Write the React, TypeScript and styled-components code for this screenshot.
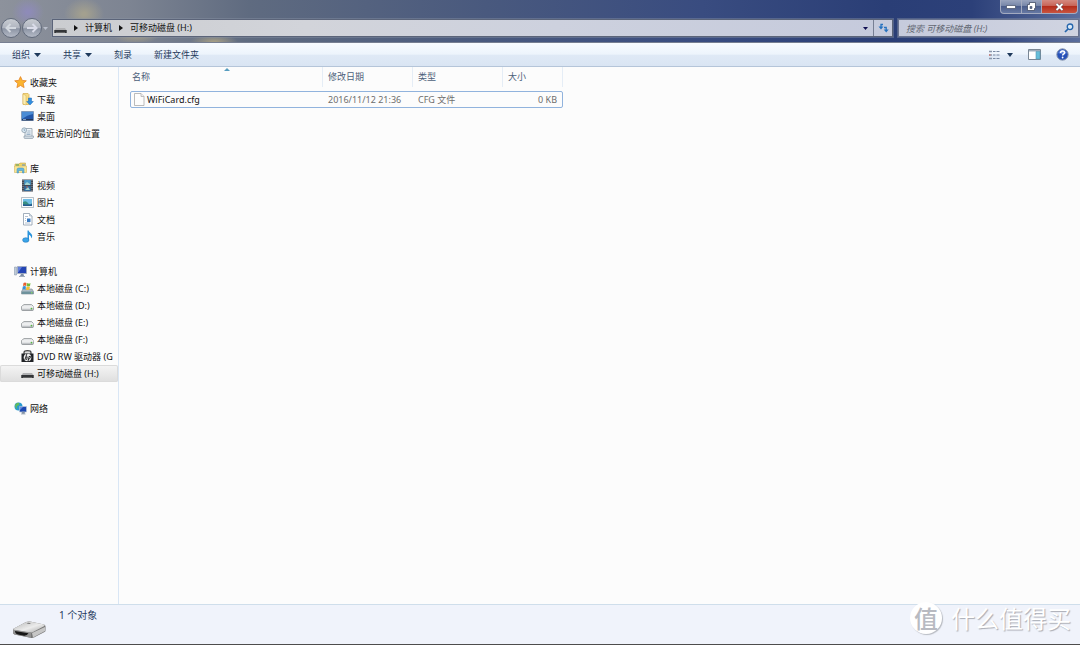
import React from "react";
import styled, { createGlobalStyle } from "styled-components";

const GlobalStyle = createGlobalStyle`
  *, *::before, *::after { box-sizing: border-box; }
  body {
    margin: 0;
    background: #fcfcfc;
    color: #111;
    font-family: "Noto Sans", "Noto Sans CJK SC", sans-serif;
    font-size: 9px;
    line-height: 17px;
  }
  button, input { font: inherit; color: inherit; margin: 0; padding: 0; border: 0; background: none; }
  svg { display: block; flex: none; }
  a { color: inherit; text-decoration: none; }
`;

const Window = styled.div`
  display: flex;
  flex-direction: column;
  min-height: 100vh;
  border-bottom: 1px solid #4d4c4c;
`;

const Frame = styled.header`
  display: flex;
  flex-direction: column;
  height: 43px;
  border-bottom: 1px solid #777f92;
  background:
    radial-gradient(ellipse 16px 14px at 28px 12px, #8e8bb8 10%, transparent 100%),
    radial-gradient(ellipse 20px 16px at 84px 14px, #a3a08f 10%, transparent 100%),
    radial-gradient(ellipse 26px 12px at 136px 32px, #b0a583 10%, transparent 100%),
    radial-gradient(ellipse 24px 8px at 214px 42px, #a39c85 10%, transparent 100%),
    linear-gradient(90deg, #8d929c 0%, #7d8492 12%, #5f6b80 23%, #49597e 45%, #394c80 65%, #2a3e76 82%, #2c4079 90%, #5b6e9d 100%);
`;

const Captions = styled.div`
  display: flex;
  justify-content: flex-end;
  height: 18px;
  padding-right: 2px;
`;

const Caption = styled.button<{ $wide?: boolean; $edge?: boolean }>`
  display: grid;
  place-items: center;
  width: ${(p) => (p.$wide ? "36px" : p.$edge ? "22px" : "20px")};
  height: 14px;
  border: 1px solid #a3aac0;
  border-top: 0;
  border-left-width: ${(p) => (p.$edge ? "1px" : "0")};
  border-radius: ${(p) => (p.$edge ? "0 0 0 4px" : p.$wide ? "0 0 4px 0" : "0")};
  background: ${(p) =>
    p.$wide
      ? "linear-gradient(#d48a80 0%, #c9675a 42%, #b52d1b 50%, #c9543f 100%)"
      : "linear-gradient(#99a4be 0%, #7988aa 42%, #4b5d8b 50%, #6678a3 100%)"};
`;

const AddressRow = styled.div`
  display: flex;
  align-items: center;
  height: 20px;
  padding-right: 1px;
`;

const HistoryButtons = styled.div`
  display: flex;
  align-items: center;
  gap: 1px;
  width: 52px;
  padding-left: 1px;
`;

const RoundButton = styled.button`
  display: grid;
  place-items: center;
  width: 20px;
  height: 20px;
  border: 1px solid #626b7c;
  border-radius: 50%;
  background: linear-gradient(#c8ccd2 0%, #b0b5c0 48%, #8c94a4 54%, #b4bac6 100%);
`;

const AddressBar = styled.div`
  display: flex;
  flex: 1;
  height: 18px;
  border: 1px solid #5b6479;
  box-shadow: 0 0 0 1px #8d95a866;
  background: linear-gradient(90deg, #cbcdd0 0%, #d2d4da 30%, #cdd1de 60%, #c5cadc 100%);
`;

const Crumbs = styled.nav`
  display: flex;
  flex: 1;
  align-items: center;
  gap: 7px;
  padding-left: 1px;
  line-height: 14px;
`;

const BarButton = styled.button<{ $divided?: boolean }>`
  display: grid;
  place-items: center;
  width: ${(p) => (p.$divided ? "19px" : "16px")};
  border-left: ${(p) => (p.$divided ? "1px solid #777f94" : "0")};
`;

const Search = styled.label`
  display: flex;
  align-items: center;
  width: 181px;
  height: 18px;
  margin-left: 5px;
  padding: 0 4px 0 7px;
  border: 1px solid #69738f;
  box-shadow: 0 0 0 1px #8d95a866;
  background: linear-gradient(90deg, #c6cbdc, #d0d4e1);
`;

const SearchInput = styled.input`
  flex: 1;
  min-width: 0;
  height: 14px;
  font-style: italic;
  &::placeholder { color: #626873; opacity: 1; }
`;

const Toolbar = styled.div`
  display: flex;
  align-items: center;
  justify-content: space-between;
  height: 24px;
  padding: 0 11px 0 12px;
  border-bottom: 1px solid #b5c5d9;
  background: linear-gradient(#f8fbff 0%, #edf4fc 48%, #dfe9f6 54%, #dae5f3 100%);
  color: #1e395b;
`;

const Commands = styled.div`
  display: flex;
  align-items: center;
  gap: 22px;
`;

const Command = styled.button`
  display: flex;
  align-items: center;
  gap: 4px;
`;

const ViewTools = styled.div`
  display: flex;
  align-items: center;
  gap: 15px;
`;

const ViewSplit = styled.div`
  display: flex;
  align-items: center;
  gap: 7px;
`;

const Body = styled.div`
  display: flex;
  flex: 1;
`;

const Sidebar = styled.nav`
  display: flex;
  flex-direction: column;
  gap: 18px;
  width: 119px;
  padding-top: 7px;
  border-right: 1px solid #d9e6f5;
  overflow: hidden;
`;

const Group = styled.ul`
  list-style: none;
  margin: 0;
  padding: 0;
`;

const TreeLink = styled.a<{ $root?: boolean; $selected?: boolean }>`
  display: flex;
  align-items: center;
  gap: 3px;
  height: 17px;
  padding-left: ${(p) => (p.$root ? "14px" : "21px")};
  white-space: nowrap;
  border-radius: 2px;
  background: ${(p) => (p.$selected ? "linear-gradient(#f5f5f5, #dedede)" : "none")};
  box-shadow: ${(p) => (p.$selected ? "inset 0 0 0 1px #dbdbdb" : "none")};
`;

const Content = styled.main`
  flex: 1;
  padding-left: 11px;
`;

const FileTable = styled.table`
  width: 433px;
  table-layout: fixed;
  border-spacing: 0;
`;

const HeadCell = styled.th<{ $width: number }>`
  width: ${(p) => p.$width}px;
  height: 20px;
  padding: 0 0 1px 5px;
  border-right: 1px solid #e5edf6;
  color: #4c607a;
  font-weight: 400;
  text-align: left;
  &:first-child { padding-left: 2px; }
`;

const HeadInner = styled.div`
  display: grid;
  grid-template-columns: 1fr auto 1fr;
  align-items: start;
`;

const FileRow = styled.tr`
  outline: 1px solid #91b3dd;
  outline-offset: -1px;
  border-radius: 2px;
`;

const Spacer = styled.tr`
  height: 4px;
`;

const Cell = styled.td<{ $right?: boolean }>`
  height: 17px;
  padding: 0 6px 0 5px;
  color: #6d6d6d;
  white-space: nowrap;
  text-align: ${(p) => (p.$right ? "right" : "left")};
  &:first-child { padding-left: 3px; }
`;

const FileName = styled.span`
  display: flex;
  align-items: center;
  gap: 1px;
  color: #111;
`;

const Details = styled.footer`
  display: flex;
  align-items: flex-start;
  height: 40px;
  padding: 0 9px 0 12px;
  border-top: 1px solid #cfdeeb;
  background: #f0f3fb;
  color: #1e395b;
`;

const DriveArt = styled.div`
  width: 47px;
  padding-top: 16px;
`;

const Count = styled.span`
  padding-top: 2px;
  font-size: 10px;
`;

const Watermark = styled.div`
  display: flex;
  align-items: center;
  gap: 9px;
  height: 26px;
  margin-left: auto;
  color: #fff;
  font-family: "Noto Sans CJK SC", sans-serif;
  font-size: 24px;
  line-height: 26px;
  text-shadow: 1px 1px 1px #a9acb4;
`;

const Seal = styled.span`
  display: grid;
  place-items: center;
  width: 32px;
  height: 32px;
  border-radius: 50%;
  background: #fff;
  box-shadow: 1px 1px 1px #b8bbc2;
  color: #b8bac1;
  font-weight: 500;
  text-shadow: none;
`;

const Down = ({ color = "#1e395b" }: { color?: string }) => (
  <svg width="7" height="4" viewBox="0 0 7 4"><path d="M0 0h7L3.500 4z" fill={color} /></svg>
);
const Right = () => (
  <svg width="4" height="6" viewBox="0 0 4 6"><path d="M0 0l4 3-4 3z" fill="#111" /></svg>
);

const paths: Record<string, React.ReactNode> = {
  star: <path d="M6.500.6l1.700 3.800 4.100.4-3.100 2.700.9 4.100-3.600-2.100-3.600 2.100.9-4.100L.7 4.800l4.100-.4z" fill="#fbb42f" stroke="#e48424" strokeWidth=".8" />,
  download: <>
    <path d="M2 .5h5l1 1v10H2z" fill="#f7dc83" stroke="#d5ae4c" strokeWidth=".7" />
    <path d="M2 1l3 1.500V12l-3-1z" fill="#fbeeb4" stroke="#d5ae4c" strokeWidth=".5" />
    <path d="M7.500 5h3v3.500h1.800L9 12 5.700 8.500h1.800z" fill="#318fe0" stroke="#1967b5" strokeWidth=".5" />
  </>,
  desktop: <>
    <path d="M.5 1.500h12v9H.5z" fill="#2457a9" stroke="#7892b2" strokeWidth=".7" />
    <path d="M1 2h11v2Q6 5 1 9z" fill="#4b8cd5" />
    <path d="M1 9h11v1.500H1z" fill="#24375b" /><path d="M2 9.500h3" stroke="#a7c8e9" strokeWidth=".7" />
  </>,
  recent: <>
    <path d="M4 1.500h7v8H4z" fill="#edf3f7" stroke="#8292a1" strokeWidth=".7" />
    <path d="M3 9h9.500v1.500q-.5 1-1.500 1H4q-1 0-1-1z" fill="#cfd9e1" stroke="#8292a1" strokeWidth=".6" />
    <circle cx="3.200" cy="3.200" r="2.400" fill="#dceaf3" stroke="#8094a5" strokeWidth=".7" />
    <path d="M3.200 1.800v1.600h1M6.500 4h3M5.500 6h4M5.500 7.500h4" stroke="#6889aa" strokeWidth=".6" fill="none" />
  </>,
  library: <>
    <path d="M1 2h4l1-1h5.500v4H1z" fill="#f3d565" stroke="#bfa654" strokeWidth=".6" />
    <path d="M.5 4h12v6.500H.5z" fill="#f9e696" stroke="#d3b75c" strokeWidth=".6" />
    <path d="M3 11V7.500Q3 6 4.500 6h4Q10 6 10 7.500V11H8.500V8.500h-4V11z" fill="#68b7df" stroke="#3a8db9" strokeWidth=".5" />
    <path d="M2 3h3" stroke="#50a366" /><path d="M8 3h3" stroke="#588fc9" />
  </>,
  video: <>
    <path d="M1 .5h11v12H1z" fill="#434954" />
    <path d="M3.200 1h6.600v5H3.200z" fill="#4a99c6" /><path d="M3.200 7h6.600v5H3.200z" fill="#316a9b" />
    <path d="M4 5l2-2 3 2v1H4zM4 11l3-3 2 3z" fill="#a3d4d2" />
    <path d="M2 1v11M11 1v11" stroke="#a9aeb5" strokeWidth=".8" strokeDasharray="1 1" />
    <path d="M5 8h2" stroke="#bb6250" />
  </>,
  picture: <>
    <path d="M.5 1.500h12v10H.5z" fill="#f8fafb" stroke="#9aa5af" strokeWidth=".7" />
    <path d="M2 3h9v7H2z" fill="#70bde5" /><path d="M2 6q3-2 5 1t4 0v3H2z" fill="#388f82" />
    <path d="M2 8q4 1 9 0v2H2z" fill="#245b91" />
  </>,
  document: <>
    <path d="M2.500.5h6l2.500 2.500v9H2.500z" fill="#fff" stroke="#8b9bab" strokeWidth=".8" />
    <path d="M8.500.5V3H11" fill="#d4dee7" stroke="#8b9bab" strokeWidth=".5" />
    <path d="M6 5.500h3.500v3.500H6z" fill="#397bc2" /><path d="M4 3.500h3M4 5.500h1M4 7.500h1M4 10h5" stroke="#97a8bb" strokeWidth=".7" />
  </>,
  music: <>
    <path d="M6.500.5h1.200c.4 2.200 3.700 3 3.500 5.500-.1 1.200-.7 2-1.200 2.300.5-2.200-1-2.800-2-3.500v5.400H6.500z" fill="#2b94dc" />
    <ellipse cx="4.800" cy="10" rx="3.200" ry="2.300" fill="#3ca5e8" stroke="#1b6eb4" strokeWidth=".5" />
  </>,
  computer: <>
    <path d="M.5 2h2v8h-2z" fill="#bfcbd7" stroke="#8192a8" strokeWidth=".5" />
    <path d="M3.500 1.500h9v7h-9z" fill="#2445b4" stroke="#a4aebe" strokeWidth=".8" />
    <path d="M4 2h4L4.500 7H4z" fill="#607ddc" /><path d="M7 9h2.500l.5 2H6z" fill="#7f8fa6" /><path d="M5 11.500h6" stroke="#9eacba" />
  </>,
  system: <>
    <path d="M2 7h9l1.500 2.500V12H.5V9.500z" fill="#aebbc5" stroke="#7c8991" strokeWidth=".6" /><path d="M.8 9.500h11.500V12H.8z" fill="#6e929c" />
    <path d="M2.500 1Q4 0 5.500 1L5 4Q3.700 3 2 4z" fill="#e65d2d" /><path d="M6 1q2 1 3.500 0L9 4Q7 5 5.500 4z" fill="#75ba38" />
    <path d="M1.800 4.500q1.700-1 3.200 0L4.500 7.500Q3 6.500 1.300 7.500z" fill="#378ed5" /><path d="M5.500 4.500q1.700 1 3.500 0L8.300 7.500Q6.500 8.500 5 7.500z" fill="#f4bd31" />
    <circle cx="10.800" cy="10.700" r=".7" fill="#90e05c" />
  </>,
  drive: <>
    <path d="M3 5.500h7.500l2 2v3q0 1-1 1H1.500q-1 0-1-1v-3z" fill="#e1e3e5" stroke="#85898d" strokeWidth=".7" />
    <path d="M1 8h11.500" stroke="#f9f9f9" /><path d="M1 11h11" stroke="#90969a" strokeWidth=".8" />
    <circle cx="10.500" cy="9.600" r=".9" fill="#54b542" />
  </>,
  dvd: <>
    <path d="M3 4V2.500Q3 .7 6.500.7T10 2.500V4" fill="#ddd" stroke="#444" strokeWidth="1.200" />
    <path d="M.5 3.500h12V12H.5z" fill="#202225" /><circle cx="6.500" cy="7.500" r="3.800" fill="#f0f0f0" />
    <path d="M6 3.500L3.800 10M5 7.300q1.700-1.300 1.200.3L5.500 10M8.300 6L6.800 12M8 6.500q2.200-.5 1.500 1T7.300 9.500" fill="none" stroke="#17191b" strokeWidth=".9" />
  </>,
  removable: <>
    <path d="M2 6h9l1.700 2.500V11H.3V8.500z" fill="#b0b1b3" /><path d="M.3 8h12.400v3H.3z" fill="#333538" /><path d="M2 10.500h9" stroke="#777" strokeWidth=".7" />
  </>,
  network: <>
    <circle cx="4.500" cy="4.500" r="4" fill="#289bd1" /><path d="M1 3q2-3 4-2 1 2-1 2.500T3 7Q1 6 1 3" fill="#62bb5c" />
    <path d="M5.500 4.500h7v5.500h-7z" fill="#1c48b2" stroke="#bbc9da" strokeWidth=".7" /><path d="M6 5h3L6 8z" fill="#668ce0" />
    <path d="M8 10h2.500v1.500H8zM7 12h4.500" fill="#7d8ca0" stroke="#8c9bae" strokeWidth=".7" />
  </>,
  file: <>
    <path d="M1.500.5h6.500L11 3.500v9H1.500z" fill="#fdfdfd" stroke="#aaa" strokeWidth=".8" /><path d="M8 .5v3h3" fill="#eee" stroke="#aaa" strokeWidth=".7" />
  </>,
};

const Glyph = ({ name }: { name: string }) => (
  <svg width="13" height="13" viewBox="0 0 13 13" aria-hidden="true">{paths[name]}</svg>
);

const groups: [string, string][][] = [
  [["star", "收藏夹"], ["download", "下载"], ["desktop", "桌面"], ["recent", "最近访问的位置"]],
  [["library", "库"], ["video", "视频"], ["picture", "图片"], ["document", "文档"], ["music", "音乐"]],
  [["computer", "计算机"], ["system", "本地磁盘 (C:)"], ["drive", "本地磁盘 (D:)"], ["drive", "本地磁盘 (E:)"], ["drive", "本地磁盘 (F:)"], ["dvd", "DVD RW 驱动器 (G"], ["removable", "可移动磁盘 (H:)"]],
  [["network", "网络"]],
];

export default function App() {
  return (
    <Window>
      <GlobalStyle />
      <Frame>
        <Captions>
          <Caption $edge aria-label="最小化">
            <svg width="10" height="5"><path d="M.5 1.500h9v3h-9z" fill="#fff" stroke="#434d65" strokeWidth=".7" /></svg>
          </Caption>
          <Caption aria-label="还原">
            <svg width="9" height="9" viewBox="0 0 9 9"><path d="M2.500.5h6v6h-1v2h-7v-6h2z" fill="#fff" stroke="#434d65" strokeWidth=".8" /><path d="M3 4.500h2v2H3z" fill="#5f7097" stroke="#434d65" strokeWidth=".6" /></svg>
          </Caption>
          <Caption $wide aria-label="关闭">
            <svg width="9" height="8" viewBox="0 0 9 8"><path d="M1.500 1l6 6M7.500 1l-6 6" stroke="#593e48" strokeWidth="3" /><path d="M1.500 1l6 6M7.500 1l-6 6" stroke="#fff" strokeWidth="1.900" /></svg>
          </Caption>
        </Captions>
        <AddressRow>
          <HistoryButtons>
            <RoundButton aria-label="后退">
              <svg width="12" height="10" viewBox="0 0 12 10"><path d="M5.500 1L1.500 5l4 4M2 5h9" fill="none" stroke="#d3d8df" strokeWidth="2" /></svg>
            </RoundButton>
            <RoundButton aria-label="前进">
              <svg width="12" height="10" viewBox="0 0 12 10"><path d="M6.500 1l4 4-4 4M10 5H1" fill="none" stroke="#dadce9" strokeWidth="2" /></svg>
            </RoundButton>
            <svg width="5" height="3" viewBox="0 0 5 3"><path d="M0 0h5L2.500 3z" fill="#b9becb" /></svg>
          </HistoryButtons>
          <AddressBar>
            <Crumbs aria-label="地址">
              <Glyph name="removable" />
              <Right />
              <a href="#computer">计算机</a>
              <Right />
              <a href="#h">可移动磁盘 (H:)</a>
            </Crumbs>
            <BarButton aria-label="以前的位置">
              <svg width="5" height="3" viewBox="0 0 5 3"><path d="M0 0h5L2.500 3z" fill="#100f52" /></svg>
            </BarButton>
            <BarButton $divided aria-label="刷新">
              <svg width="11" height="10" viewBox="0 0 11 10"><path d="M5 1.500H3v3" fill="none" stroke="#2672bf" strokeWidth="1.300" /><path d="M.5 3.500h5L3 6.500z" fill="#2672bf" /><path d="M6 4.500h2.200v3" fill="none" stroke="#2672bf" strokeWidth="1.300" /><path d="M5.700 6.500h5L8.200 9.500z" fill="#2672bf" /></svg>
            </BarButton>
          </AddressBar>
          <Search>
            <SearchInput type="search" aria-label="搜索" placeholder="搜索 可移动磁盘 (H:)" />
            <svg width="10" height="10" viewBox="0 0 10 10"><circle cx="6" cy="3.800" r="2.800" fill="#dbe9f7" stroke="#2465ac" strokeWidth="1.300" /><path d="M4 6L1 9" stroke="#2465ac" strokeWidth="1.700" /></svg>
          </Search>
        </AddressRow>
      </Frame>

      <Toolbar>
        <Commands>
          <Command>组织<Down /></Command>
          <Command>共享<Down /></Command>
          <Command>刻录</Command>
          <Command>新建文件夹</Command>
        </Commands>
        <ViewTools>
          <ViewSplit>
            <Command aria-label="更改视图">
              <svg width="12" height="10" viewBox="0 0 12 10"><path d="M1 1.500h3M1 5h3M1 8.500h3" stroke="#8a97ab" strokeWidth="1.500" /><path d="M1 5h1.500" stroke="#d07b71" strokeWidth="1.500" /><path d="M5 1.500h2.500M8.500 1.500h3M5 5h2.500M8.500 5h3M5 8.500h2.500M8.500 8.500h3" stroke="#7889a3" /></svg>
            </Command>
            <Command aria-label="更多选项"><svg width="6" height="4" viewBox="0 0 6 4"><path d="M0 0h6L3 4z" fill="#1e395b" /></svg></Command>
          </ViewSplit>
          <Command aria-label="显示预览窗格">
            <svg width="13" height="11" viewBox="0 0 13 11"><path d="M.5.5h12v10H.5z" fill="#fff" stroke="#7a8795" /><path d="M1 1h11v1.500H1z" fill="#9faebc" /><path d="M8 2.500h4V10H8z" fill="#66bed9" stroke="#5598b5" strokeWidth=".6" /></svg>
          </Command>
          <Command aria-label="获取帮助">
            <svg width="13" height="13" viewBox="0 0 13 13"><circle cx="6.500" cy="6.500" r="5.700" fill="#2751b8" stroke="#8d99af" /><path d="M2 5q4-6 9 0-4 2-9 0z" fill="#6388dd" /><path d="M4.600 5q0-2 2-2t2 1.700q0 1-1.300 1.600-.7.400-.7 1.200" fill="none" stroke="#fff" strokeWidth="1.500" /><circle cx="6.600" cy="9.500" r=".9" fill="#fff" /></svg>
          </Command>
        </ViewTools>
      </Toolbar>

      <Body>
        <Sidebar aria-label="导航窗格">
          {groups.map((items) => (
            <Group key={items[0][1]}>
              {items.map(([icon, text], i) => (
                <li key={text}>
                  <TreeLink href="#" $root={i === 0} $selected={icon === "removable"}>
                    <Glyph name={icon} />{text}
                  </TreeLink>
                </li>
              ))}
            </Group>
          ))}
        </Sidebar>
        <Content>
          <FileTable>
            <thead>
              <tr>
                <HeadCell $width={193}>
                  <HeadInner>
                    <span>名称</span>
                    <svg width="6" height="3" viewBox="0 0 6 3"><path d="M0 3l3-3 3 3z" fill="#579dc0" /></svg>
                  </HeadInner>
                </HeadCell>
                <HeadCell $width={90}>修改日期</HeadCell>
                <HeadCell $width={90}>类型</HeadCell>
                <HeadCell $width={60}>大小</HeadCell>
              </tr>
            </thead>
            <tbody>
              <Spacer />
              <FileRow>
                <Cell><FileName><Glyph name="file" />WiFiCard.cfg</FileName></Cell>
                <Cell>2016/11/12 21:36</Cell>
                <Cell>CFG 文件</Cell>
                <Cell $right>0 KB</Cell>
              </FileRow>
            </tbody>
          </FileTable>
        </Content>
      </Body>

      <Details>
        <DriveArt>
          <svg width="34" height="18" viewBox="0 0 34 18">
            <defs><linearGradient id="top" x2="1" y2="1"><stop stopColor="#b5b5b5" /><stop offset=".55" stopColor="#ececec" /><stop offset="1" stopColor="#a2a2a2" /></linearGradient></defs>
            <path d="M1 8L14 1q2-.7 4-.4l14 2.800q1.500.5 1.500 2v4q0 1-1 1.600L22 16.500q-1.500.8-3.500.3L2.500 13.500Q1 13 1 11.500z" fill="#777" />
            <path d="M1 8L14 1q2-.7 4-.4l14 2.800q1.500.7 0 1.800L21 11q-2 .8-4 .4L2 9q-1-.3-1-1z" fill="url(#top)" />
            <path d="M1 8.500l18 3v5.300L2.500 13.500Q1 13 1 11.500z" fill="#929292" />
            <path d="M3 10l13.500 2.300q-1.500 2.700-4.500 2.400l-6-1.200Q3 12.500 3 10z" fill="#171717" />
            <path d="M20 12l13-6v4L21 16.500z" fill="#c6c6c6" /><path d="M16 1.700l3 .6-1.500.7-3-.5z" fill="#777" />
          </svg>
        </DriveArt>
        <Count>1 个对象</Count>
        <Watermark><Seal>值</Seal><span>什么值得买</span></Watermark>
      </Details>
    </Window>
  );
}
